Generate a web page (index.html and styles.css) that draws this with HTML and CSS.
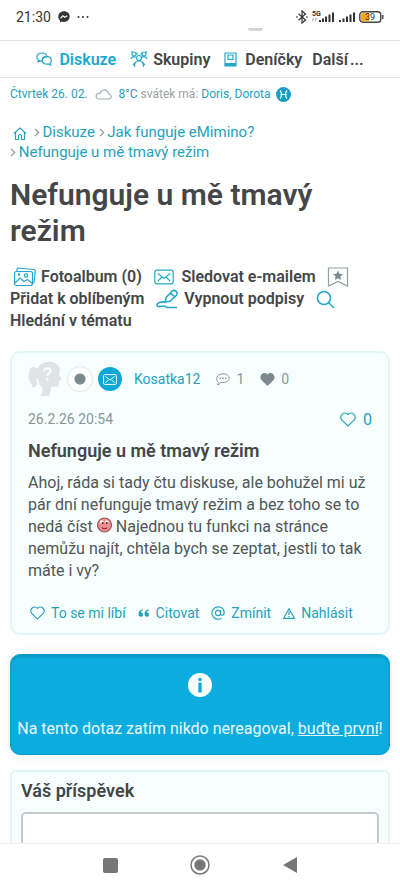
FILE: index.html
```html
<!DOCTYPE html>
<html lang="cs">
<head>
<meta charset="utf-8">
<meta name="viewport" content="width=device-width, initial-scale=1">
<title>Nefunguje u mě tmavý režim</title>
<link rel="stylesheet" href="styles.css">
</head>
<body>
<div class="status">
  <span class="clock">21:30</span>
  <svg class="messenger" width="12" height="12" viewBox="0 0 12 12"><path d="M6 .3C2.700.3.300 2.700.3 5.700c0 1.600.6 2.900 1.700 3.900v2l1.900-1c.7.2 1.300.3 2.100.3 3.300 0 5.700-2.300 5.700-5.300S9.300.3 6 .3z" fill="#333"/><path d="M2.500 7.300l2.300-2.500 1.800 1.500 2.700-1.600" fill="none" stroke="#fff" stroke-width="1.200"/></svg>
  <svg class="solid" width="12" height="4" viewBox="0 0 12 4"><circle cx="1.500" cy="2" r="1"/><circle cx="6" cy="2" r="1"/><circle cx="10.500" cy="2" r="1"/></svg>
  <span class="handle"></span>
  <span class="signals">
    <svg width="12" height="14" viewBox="0 0 12 14" stroke="#333"><path d="M2.500 3.800l7 6.200L6 13V1l3.500 3-7 6.200"/><path d="M0 7h2M10 7h2"/></svg>
    <svg class="solid" width="23" height="14" viewBox="0 0 23 14"><text x="0" y="6" font-size="7" font-weight="700">5G</text><path d="M7 10h2v2H7zM10 8.500h2V12h-2zM13 6.500h2V12h-2zM16.500 4.500h2V12h-2zM20 2.500h2V12h-2z"/><path d="M0 11l1.500-3M3 11l1.500-3" stroke="#aaa"/></svg>
    <svg class="solid" width="16" height="14" viewBox="0 0 16 14"><path d="M0 10h2v2H0zM3.500 8.500h2V12h-2zM7 6.500h2V12H7zM10.500 4.500h2V12h-2zM14 2.500h2V12h-2z"/></svg>
    <svg width="25" height="12" viewBox="0 0 25 12"><rect x=".8" y=".8" width="21" height="10.400" rx="3" fill="#fff" stroke="#444" stroke-width="1.400"/><path d="M3.500 2H10v8H3.500Q2 10 2 8.500v-5Q2 2 3.500 2z" fill="#f5a623"/><path d="M23.800 4v4" stroke="#444" stroke-width="1.400"/><text x="6" y="9" font-size="9" fill="#333">39</text></svg>
  </span>
</div>

<nav class="tabs">
  <a href="#" class="tab active"><svg width="16" height="14" viewBox="0 0 16 14"><path d="M3 8.500C-.5 6.500.4 1 5.800 1c3.200 0 5 1.700 5.100 3.600C8.500 4.700 6 6 6.200 9.200c-.8 0-1.500-.1-2-.3L1.500 10z"/><path d="M6.200 8.400c0-2.200 2-3.800 4.600-3.800s4.600 1.600 4.600 3.800c0 1.200-.5 2-1.300 2.700l.6 2-2.400-1.100c-3.300.7-6.100-.9-6.100-3.600z"/></svg>Diskuze</a>
  <a href="#" class="tab groups"><svg width="18" height="18" viewBox="0 0 18 18"><circle cx="4" cy="4" r="2"/><circle cx="14" cy="4" r="2"/><circle cx="9" cy="8" r="2.500"/><path d="M4.500 17c0-4 2-6 4.500-6s4.500 2 4.500 6M1 1.500l2 1M17 1.500l-2 1M1 9c1-3 4-3 5.500-1M17 9c-1-3-4-3-5.500-1M5.500 2.500l2 2M12.500 2.500l-2 2M3 15l3-3M15 15l-3-3"/></svg>Skupiny</a>
  <a href="#" class="tab diaries"><svg width="13" height="15" viewBox="0 0 13 15"><path d="M1 1h11v13H1zM4 3h5v4.500H4zM1 11.500h11"/><path d="M1 13h11" stroke-width="2"/></svg>Deníčky</a>
  <a href="#" class="tab more">Další<span>...</span></a>
</nav>

<main>
  <div class="today">
    <a href="#">Čtvrtek 26. 02.</a>
    <svg class="cloud" width="17" height="11" viewBox="0 0 17 11"><path d="M4 10h9c4.500 0 4-5 .8-5C13 2 10 0 7.500 1.500 6 2 5.300 3.400 5.200 4.500 0 4 0 10 4 10z"/></svg>
    <a href="#">8°C</a> <span>svátek má:</span> <a href="#">Doris, Dorota</a>
    <svg class="zodiac" width="15" height="15" viewBox="0 0 15 15"><circle cx="7.500" cy="7.500" r="7.500" fill="#169fc4"/><path d="M4 3.500c2 2 2 6 0 8M11 3.500c-2 2-2 6 0 8M4.500 7.500h6" fill="none" stroke="#fff" stroke-width="1.200"/></svg>
  </div>

  <nav class="crumbs">
    <a href="#" aria-label="Domů"><svg class="home" width="14" height="13" viewBox="0 0 14 13"><path d="M1 6.500L7 1l6 5.500M2.500 5.500v7h3V9c0-2 3-2 3 0v3.500h3v-7"/></svg></a>
    <svg class="chev" width="6" height="9" viewBox="0 0 6 9"><path d="M1 .8l3.700 3.700L1 8.200"/></svg>
    <a href="#">Diskuze</a>
    <svg class="chev" width="6" height="9" viewBox="0 0 6 9"><path d="M1 .8l3.700 3.700L1 8.200"/></svg>
    <a href="#">Jak funguje eMimino?</a>
    <span class="last"><svg class="chev" width="6" height="9" viewBox="0 0 6 9"><path d="M1 .8l3.700 3.700L1 8.200"/></svg>
    <a href="#">Nefunguje u mě tmavý režim</a></span>
  </nav>

  <h1>Nefunguje u mě tmavý režim</h1>

  <div class="tools">
    <a href="#"><svg width="24" height="20" viewBox="0 0 24 20"><rect x="1.500" y="4.500" width="18" height="14" rx="2"/><path d="M4 4V2.500Q4 1 5.500 1l15 1.500q2 .2 1.800 2L21 15q-.2 1.500-1.500 1.500M2 16l5-5 4 3.500 3.500-2 5 4"/><circle cx="13" cy="8.500" r="1.700"/><circle cx="6" cy="7.500" r=".6"/></svg><span>Fotoalbum (0)</span></a>
    <a href="#"><svg class="mail" width="20" height="16" viewBox="0 0 20 16"><rect x=".8" y="1.200" width="18.400" height="13.600" rx="2"/><path d="M4 4.500l6 5 6-5M4 12l4-4M16 12l-4-4"/></svg><span>Sledovat e-mailem</span></a>
    <a href="#"><svg class="bookmark" width="22" height="20" viewBox="0 0 22 20"><path d="M1.500 1h19v18L11 14.500 1.500 19z"/><path class="star" d="M11 3.500l1.500 3.200 3.500.4-2.600 2.400.7 3.500L11 11.300 7.900 13l.7-3.500L6 7.100l3.500-.4z"/></svg> <span>Přidat k oblíbeným</span></a>
    <a href="#"><svg class="pen" width="24" height="20" viewBox="0 0 24 20"><path d="M9 13l1.200-4.500L16 2.300q1.700-1.700 4 0t.2 4.200L14 12.300zM14.500 4l4 3.700"/><path d="M9 13c-4-.5-8 1-8 3 0 3 5 1 7 1s1.500 1.500 3 1.500h10"/></svg><span>Vypnout podpisy</span></a>
    <a href="#"><svg class="search" width="19" height="19" viewBox="0 0 19 19"><circle cx="8" cy="8" r="6.500"/><path d="M12.700 12.700l5.300 5.300"/></svg> <span>Hledání v tématu</span></a>
  </div>

  <article class="card post">
    <header class="author">
      <svg class="avatar" width="34" height="36" viewBox="0 0 34 36"><path d="M12 4c5-5 19-5 20 5l-1 4 2.500 6-2.500 1-.5 4.500c-1 2-5 1-7 1.500L21 35H12c3-3 3-6 2-9-3-2-4-5-4-9l-2 1c3 5 0 10-4 8 1-2-1.500-3-2.500-6C0 17-.5 14 2 11 0 7 5 4 9 8z" fill="#e0e4e4"/><path d="M16 10c.5-4 6.500-3.500 6.500-.3 0 2.300-3.200 2.300-3.200 5.300" stroke="#f6fffe" stroke-width="2"/><circle cx="19.300" cy="18.500" r="1.300" fill="#f6fffe"/></svg>
      <span class="presence"></span>
      <a href="#" class="pm" aria-label="Zpráva"><svg width="14" height="11" viewBox="0 0 14 11"><rect x=".6" y=".6" width="12.800" height="9.800" rx="1"/><path d="M2.500 2.500L7 6l4.500-3.500M2.500 8.800l3-3M11.500 8.800l-3-3"/></svg></a>
      <a href="#" class="name">Kosatka12</a>
      <span class="stat"><svg width="14" height="12" viewBox="0 0 14 12"><path d="M3 11.500c-.6 0-1 .1-1.500 0l1-2C-1 7 .5.800 7 .800c8.500 0 8 8.700 0 8.700-1 0-1.500 0-2-.2z" fill="none" stroke="#8b9599" stroke-width="1"/><path d="M3.500 4.500h1.500v1.500H3.500zM6.200 4.500h1.500v1.500H6.200zM9 4.500h1.500v1.500H9z" fill="#8b9599"/></svg>1</span>
      <span class="stat"><svg width="15" height="13" viewBox="0 0 15 13"><path d="M7.500 13L1.200 6.700C-1.500 3 3.500-2.500 7.500 1.500c4-4 9 1.500 6.300 5.200z" fill="#7c898e"/></svg>0</span>
    </header>
    <div class="meta"><time>26.2.26 20:54</time><a href="#" class="likes"><svg width="16" height="15" viewBox="0 0 16 15"><path d="M8 14L1.800 7.800C-1.300 4 4.200-1.700 8 2.500c3.800-4.200 9.300 1.500 6.200 5.300z"/></svg>0</a></div>
    <h2>Nefunguje u mě tmavý režim</h2>
    <p>Ahoj, ráda si tady čtu diskuse, ale bohužel mi už pár dní nefunguje tmavý režim a bez toho se to nedá číst <svg class="smile" width="15" height="16" viewBox="0 0 15 16"><circle cx="7.500" cy="8" r="7" fill="#ee8e92" stroke="#9d5657"/><circle cx="4.800" cy="5" r="1.800" fill="#fff"/><circle cx="9.800" cy="5" r="1.800" fill="#fff"/><circle cx="5.600" cy="6" r="1" fill="#422"/><circle cx="9.800" cy="6" r="1" fill="#422"/><path d="M5 10.500c1 1.700 4 1.700 5 0" fill="none" stroke="#a12530" stroke-width="1.300"/></svg> Najednou tu funkci na stránce nemůžu najít, chtěla bych se zeptat, jestli to tak máte i vy?</p>
    <footer class="actions">
      <a href="#"><svg width="15" height="14" viewBox="0 0 16 15"><path d="M8 14L1.800 7.800C-1.300 4 4.200-1.700 8 2.500c3.800-4.200 9.300 1.500 6.200 5.300z"/></svg>To se mi líbí</a>
      <a href="#"><svg width="12" height="8" viewBox="0 0 12 8"><path class="quote" d="M5 .5C2.500.5.500 2 .5 5c0 3.500 4.500 3.500 4.500.7C5 4 4 3.300 2.700 3.300 3 2 3.800 1.600 5 1.500zM11 .5C8.500.5 6.500 2 6.500 5c0 3.500 4.500 3.500 4.500.7C11 4 10 3.300 8.700 3.300 9 2 9.800 1.600 11 1.500z"/></svg>Citovat</a>
      <a href="#"><svg width="14" height="14" viewBox="0 0 14 14"><circle cx="7" cy="7" r="2.600"/><path d="M9.600 4.200v3.600c0 2.400 3.600 1.800 3.600-1C13 3 10.500.8 7 .8A6.200 6.200 0 1 0 10.500 12.200"/></svg>Zmínit</a>
      <a href="#"><svg width="12" height="11" viewBox="0 0 12 11"><path d="M6 .8L11.400 10.300H.6zM6 3.500V7M6 8v1.200"/></svg>Nahlásit</a>
    </footer>
  </article>

  <section class="notice">
    <svg width="24" height="24" viewBox="0 0 24 24"><circle cx="12" cy="12" r="12" fill="#fff"/><circle cx="12" cy="6.500" r="1.800" fill="#0dacdf"/><path d="M10.300 9.500h3.400V19.500h-3.400z" fill="#0dacdf"/></svg>
    <div>Na tento dotaz zatím nikdo nereagoval, <a href="#reply">buďte první</a>!</div>
  </section>

  <form class="card reply">
    <label for="reply">Váš příspěvek</label>
    <textarea id="reply"></textarea>
  </form>
</main>

<div class="system">
  <button type="button" aria-label="Poslední aplikace"><svg width="15" height="15" viewBox="0 0 15 15"><rect width="15" height="15" rx="2" fill="#777"/></svg></button>
  <button type="button" aria-label="Domů"><svg width="20" height="20" viewBox="0 0 20 20"><circle cx="10" cy="10" r="9" fill="none" stroke="#777" stroke-width="1.500"/><circle cx="10" cy="10" r="5.700" fill="#777"/></svg></button>
  <button type="button" aria-label="Zpět"><svg width="14" height="16" viewBox="0 0 14 16"><path d="M14 0v16L0 8z" fill="#777"/></svg></button>
</div>
</body>
</html>
```
FILE: styles.css
```css
* { box-sizing: border-box; }
body {
  margin: 0;
  height: 100vh;
  display: flex;
  flex-direction: column;
  overflow: hidden;
  background: #fff;
  color: #444648;
  font-family: Roboto, "Liberation Sans", sans-serif;
  font-size: 16px;
}
a { color: #2a9fb9; text-decoration: none; }
svg { flex: none; fill: none; stroke-width: 1.2; }
.solid { fill: #333; }

.status {
  flex: none;
  display: flex;
  align-items: center;
  height: 41px;
  padding: 0 16px 6px;
  border-bottom: 1px solid #e2e5e6;
  gap: 7px;
  position: relative;
}
.clock { font-size: 14px; color: #333; }
.handle {
  position: absolute;
  left: 62%;
  bottom: 9px;
  width: 15px;
  height: 3px;
  border-radius: 0 0 8px 8px;
  background: #d5d5d5;
}
.signals { display: flex; align-items: center; gap: 4px; margin-left: auto; }

.tabs {
  flex: none;
  display: flex;
  justify-content: center;
  align-items: center;
  height: 37px;
  border-bottom: 1px solid #e2e5e6;
  font-weight: 600;
}
.tab { display: flex; align-items: center; gap: 5px; margin-right: 14px; color: #444648; }
.tab svg { stroke: #24a9c8; }
.tab.active { color: #1aa9ce; gap: 7px; }
.tab.diaries { gap: 8px; margin-right: 10px; }
.tab.more { gap: 2px; margin-right: 0; }

main { flex: 1; min-height: 0; overflow: hidden; padding: 7px 10px 0; }
.today { font-size: 12px; line-height: 18px; color: #9b9fa2; white-space: nowrap; }
.today svg { vertical-align: middle; }
.cloud { stroke: #a3afb4; margin: 0 4px; }
.zodiac { margin-left: 3px; }

.crumbs { margin-top: 19px; font-size: 15px; line-height: 20px; }
.crumbs svg { stroke: #2a9fb9; }
.crumbs .home { margin: 0 3px 0 3px; vertical-align: -3px; }
.crumbs .chev { stroke: #8f979b; margin-right: -1px; }
.last { display: block; }

h1 { margin: 15px 0 0; font-size: 30px; line-height: 36px; font-weight: 600; }

.tools { margin-top: 17px; line-height: 22px; font-weight: 600; font-size: 15px; }
.tools a { color: #444648; margin-right: 8px; }
.tools span { white-space: nowrap; font-size: 16px; }
.tools svg { stroke: #24a9c8; vertical-align: middle; margin: -4px 4px -2px 3px; }
.tools .mail { margin-left: 0; margin-right: 8px; }
.tools .bookmark { stroke: #929da1; margin-left: 0; }
.tools .star { fill: #7c898e; stroke: none; }
.tools .pen { margin-left: 0; stroke-width: 1.6; }
.tools .search { margin-left: 0; stroke-width: 1.6; }

.card { border: 2px solid #e2f6f8; border-radius: 10px; background: #f6fffe; }
.post { margin-top: 19px; padding: 8px 16px 10px; }
.author { display: flex; align-items: center; height: 36px; font-size: 14px; }
.presence {
  width: 26px;
  height: 26px;
  margin-left: 5px;
  border: 1px solid #e1e6e7;
  border-radius: 50%;
  background: radial-gradient(circle, #7c898e 5px, #fff 6px);
}
.pm { display: flex; align-items: center; justify-content: center; width: 24px; height: 24px; margin-left: 5px; border-radius: 50%; background: #0da8d8; }
.pm svg { stroke: #fff; stroke-width: 1; }
.name { margin: 0 16px 0 12px; }
.stat { display: flex; align-items: center; gap: 6px; margin-right: 16px; color: #8b9599; }
.meta { display: flex; justify-content: space-between; align-items: center; height: 24px; margin-top: 10px; color: #8b9599; font-size: 14px; }
.likes { display: flex; align-items: center; gap: 7px; font-size: 16px; }
.likes svg, .actions svg { stroke: #2a9fb9; }
h2 { margin: 8px 0 0; font-size: 18px; line-height: 24px; font-weight: 600; }
.post p { margin: 9px 0 0; line-height: 22px; color: #515557; }
.smile { vertical-align: -1px; }
.actions { display: flex; gap: 12px; margin-top: 21px; padding-left: 2px; font-size: 14px; line-height: 20px; white-space: nowrap; }
.actions a { display: flex; align-items: center; gap: 6px; }
.actions .quote { fill: #2a9fb9; stroke: none; }

.notice {
  display: flex;
  flex-direction: column;
  align-items: center;
  gap: 22px;
  margin-top: 19px;
  padding: 18px 0 15px;
  border: 1px solid #0b9dcb;
  border-radius: 10px;
  background: #0dacdf;
  box-shadow: 0 0 14px #f0f0f5, inset 0 2px 2px #0b97c3;
  color: #e6faff;
  line-height: 20px;
  white-space: nowrap;
}
.notice a { color: inherit; text-decoration: underline; }

.reply { margin-top: 15px; padding: 8px 9px 20px; border-radius: 6px; }
.reply label { display: block; font-size: 18px; line-height: 22px; font-weight: 600; }
.reply textarea {
  display: block;
  width: 100%;
  height: 120px;
  margin-top: 10px;
  border: 2px solid #c6caca;
  border-radius: 5px;
  background: #fff;
  resize: none;
  font: inherit;
}

.system {
  flex: none;
  display: flex;
  justify-content: center;
  align-items: center;
  gap: 50px;
  height: 46px;
  padding-bottom: 3px;
  border-top: 1px solid #eef2f3;
  background: #fff;
}
.system button { display: flex; justify-content: center; align-items: center; width: 40px; height: 40px; padding: 0; border: 0; background: none; }
```
